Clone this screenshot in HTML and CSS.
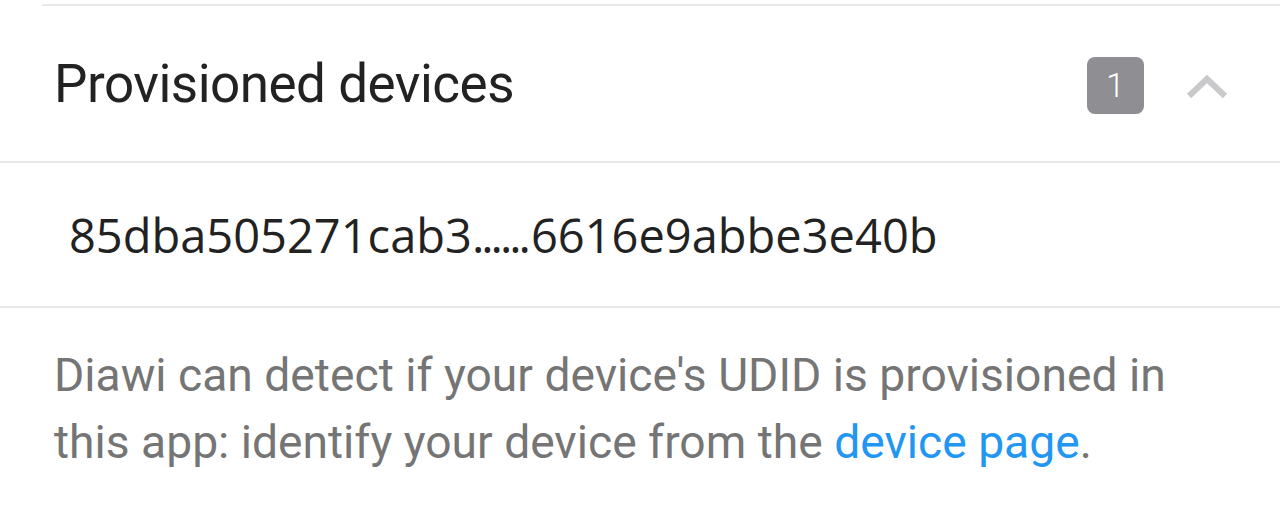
FILE: index.html
```html
<!DOCTYPE html>
<html lang="en">
<head>
  <meta charset="UTF-8">
  <meta name="viewport" content="width=device-width, initial-scale=1.0">
  <title>Provisioned devices</title>
  <link rel="stylesheet" href="styles.css">
</head>
<body>
  <div class="top-rule"></div>

  <div class="section-header">
    <h2 class="section-title">Provisioned devices</h2>
    <span class="count-badge">1</span>
    <svg class="chevron" width="42" height="26" viewBox="0 0 42 26">
      <polyline points="3,23 21,6 39,23" fill="none" stroke="#c9c9cc" stroke-width="6"/>
    </svg>
  </div>

  <div class="device-row">
    <span class="udid">85dba505271cab3<span class="dots">......</span>6616e9abbe3e40b</span>
  </div>

  <p class="hint">
    Diawi can detect if your device's UDID is provisioned in
    this app: identify your device from the <a href="#">device page</a>.
  </p>
</body>
</html>
```

FILE: styles.css
```css
body {
  margin: 0;
  background-color: #fff;
  font-family: Roboto, "Noto Sans", sans-serif;
}

.top-rule {
  margin: 4px 0 0 42px;
  height: 2px;
  background-color: #e8e8e8;
}

.section-header {
  display: flex;
  align-items: center;
  height: 155px;
  padding: 0 52px 0 54px;
  border-bottom: 2px solid #e8e8e8;
}
.section-title {
  flex: 1;
  margin: 0;
  font-size: 53px;
  font-weight: 400;
  color: #222;
  letter-spacing: -0.5px;
}
.count-badge {
  display: flex;
  justify-content: center;
  align-items: center;
  width: 57px;
  height: 57px;
  margin-top: 3px;
  border-radius: 8px;
  background-color: #8e8e93;
  color: #fff;
  font-size: 34px;
  font-weight: 300;
}
.chevron {
  margin: 4px 0 0 42px;
}

.device-row {
  display: flex;
  align-items: center;
  height: 143px;
  padding-left: 69px;
  border-bottom: 2px solid #e8e8e8;
}
.udid {
  font-family: "Open Sans", "Noto Sans", sans-serif;
  font-size: 47px;
  color: #222;
}
.dots {
  letter-spacing: -3px;
  margin-right: 3px;
}

.hint {
  margin: 0;
  padding: 34px 80px 0 54px;
  font-size: 46.2px;
  line-height: 67px;
  color: #757575;
}
.hint a {
  color: #2196f3;
  text-decoration: none;
}
```
